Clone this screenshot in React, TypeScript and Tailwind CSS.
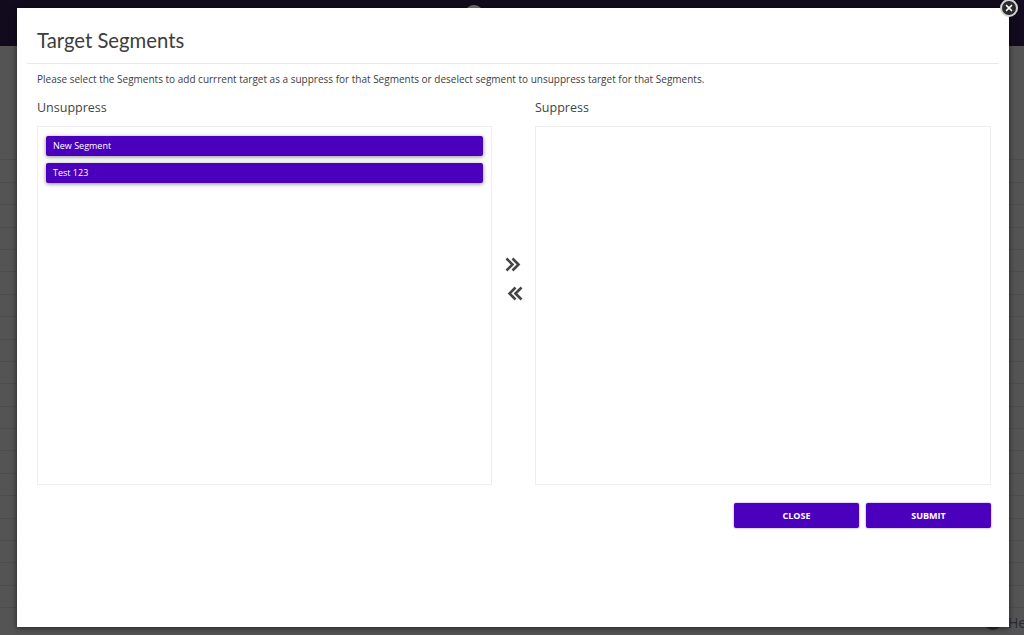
import React from 'react'
import { X } from 'lucide-react'

const rows = Array.from({ length: 21 })

function Chevrons({ flip }: { flip?: boolean }) {
  return (
    <svg width="16" height="15" viewBox="0 0 16 15" fill="none" stroke="#444444" strokeWidth="2.6" className={flip ? 'rotate-180 translate-x-[1px]' : '-translate-x-[1px]'}>
      <path d="M1.5 1.5 7.5 7.5 1.5 13.5" />
      <path d="M7.5 1.5 13.5 7.5 7.5 13.5" />
    </svg>
  )
}

function SegmentItem({ name }: { name: string }) {
  return (
    <div className="flex h-[20px] items-center rounded-[2px] bg-[#4b00bd] px-[7px] text-[9px] text-white shadow-[0_1px_4px_rgba(0,0,0,0.45)]">
      {name}
    </div>
  )
}

function ActionButton({ label }: { label: string }) {
  return (
    <button className="h-[25px] w-[125px] rounded-[2px] bg-[#4b00bd] text-[9px] font-bold text-white uppercase shadow-[0_0_2px_rgba(75,0,189,0.6)]">
      {label}
    </button>
  )
}

export default function App() {
  return (
    <div className="relative h-[635px] w-[1024px] overflow-hidden bg-[#545454] font-['Open_Sans',sans-serif]">
      {/* Page behind the overlay */}
      <div className="relative h-[46px] bg-[#120b1d]">
        <div className="absolute top-[5px] left-[464px] size-[20px] rounded-full bg-[#777777]" />
      </div>
      <div className="flex flex-col pt-[92px]">
        {rows.map((_, i) => (
          <div key={i} className="h-[22.4px] border-b border-[#4d4d4d]" />
        ))}
      </div>
      <div className="absolute top-[612px] left-[984px] size-[18px] rounded-full bg-[#2b2b2b]" />
      <div className="absolute top-[612px] left-[1008px] text-[14px] text-[#2b2b2b]">He</div>

      {/* Modal */}
      <div className="absolute top-[8px] left-[17px] flex h-[619px] w-[992px] flex-col bg-white shadow-[0_1px_6px_rgba(0,0,0,0.6)]">
        <div className="mx-[10px] flex h-[56px] shrink-0 items-center border-b border-[#e8e8e8] pt-[10px] pl-[10px]">
          <h2 className="font-['Lato',sans-serif] text-[20.3px] text-[#3d3d3d]">Target Segments</h2>
        </div>
        <div className="flex flex-col px-[20px]">
          <p className="mt-[7px] text-[10px] leading-[16px] text-[#3d3d3d]">
            Please select the Segments to add currrent target as a suppress for that Segments or deselect segment to unsuppress target for that Segments.
          </p>
          <div className="mt-[12px] flex w-[954px]">
            <div className="w-[455px]">
              <h3 className="text-[12.5px] leading-[18px] text-[#444]">Unsuppress</h3>
              <div className="mt-[9px] flex h-[359px] flex-col gap-[7px] border border-[#eeeeee] p-[8px] pt-[9px]">
                <SegmentItem name="New Segment" />
                <SegmentItem name="Test 123" />
              </div>
            </div>
            <div className="flex w-[43px] flex-col items-center gap-[14px] pt-[158px]">
              <Chevrons />
              <Chevrons flip />
            </div>
            <div className="w-[456px]">
              <h3 className="text-[12.5px] leading-[18px] text-[#444]">Suppress</h3>
              <div className="mt-[9px] h-[359px] border border-[#eeeeee]" />
            </div>
          </div>
          <div className="mt-[18px] flex w-[954px] justify-end gap-[7px]">
            <ActionButton label="Close" />
            <ActionButton label="Submit" />
          </div>
        </div>

        {/* Close badge */}
        <div className="absolute top-[-9px] right-[-9px] flex size-[18px] items-center justify-center rounded-full border-2 border-[#d4d4d4] bg-[#2a2a2a]">
          <X size={10} strokeWidth={4} className="text-white" />
        </div>
      </div>
    </div>
  )
}
